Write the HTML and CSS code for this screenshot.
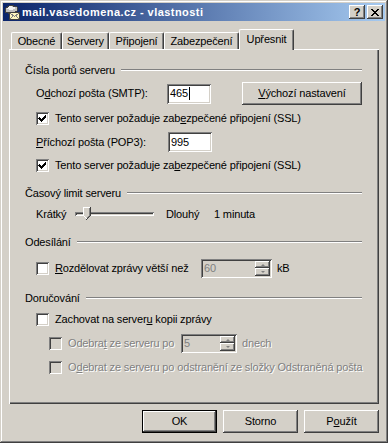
FILE: index.html
```html
<!DOCTYPE html>
<html lang="cs">
<head>
<meta charset="UTF-8">
<title>mail.vasedomena.cz - vlastnosti</title>
<link rel="stylesheet" href="styles.css">
</head>
<body>
<div class="window">
  <div class="titlebar">
    <svg class="app-icon" width="16" height="16" viewBox="0 0 16 16" shape-rendering="crispEdges">
      <polygon points="1,5 6,1 13,3 13,7 8,10 1,8" fill="#c0c0c0" stroke="#404040" stroke-width="1"/>
      <polygon points="2,5 6,2 12,4 8,6" fill="#f0f0f0"/>
      <rect x="5.5" y="8.5" width="10" height="7" fill="#fff8c0" stroke="#404040"/>
      <polyline points="6,9 10.5,12.5 15,9" fill="none" stroke="#808080"/>
      <line x1="6" y1="15" x2="9" y2="12" stroke="#808080"/>
      <line x1="15" y1="15" x2="12" y2="12" stroke="#808080"/>
    </svg>
    <span class="title">mail.vasedomena.cz - vlastnosti</span>
    <div class="caption-buttons">
      <span class="cap-btn">?</span>
      <span class="cap-btn">
        <svg width="8" height="7" viewBox="0 0 8 7" shape-rendering="crispEdges">
          <path d="M0 0h2v1h1v1h2v-1h1v-1h2v1h-1v1h-1v1h-1v1h1v1h1v1h1v1h-2v-1h-1v-1h-2v1h-1v1h-2v-1h1v-1h1v-1h1v-1h-1v-1h-1v-1h-1z" fill="#000"/>
        </svg>
      </span>
    </div>
  </div>

  <div class="client">
    <div class="tabs">
      <span class="tab tab-general">Obecné</span>
      <span class="tab tab-servers">Servery</span>
      <span class="tab tab-connect">Připojení</span>
      <span class="tab tab-security">Zabezpečení</span>
      <span class="tab tab-advanced active">Upřesnit</span>
    </div>

    <div class="panel">
      <div class="group-head first"><span>Čísla portů serveru</span><i class="etch"></i></div>

      <div class="row row-smtp">
        <span class="port-label">O<u>d</u>chozí pošta (SMTP):</span>
        <span class="field port">465<span class="caret"></span></span>
        <span class="btn btn-defaults"><u>V</u>ýchozí nastavení</span>
      </div>

      <div class="row check-row row-ssl1">
        <span class="check"><svg width="13" height="13" viewBox="0 0 13 13" shape-rendering="crispEdges" fill="#000"><path d="M3 5h1v1h1v1h1v-1h1v-1h1v-1h1v-1h1v3h-1v1h-1v1h-1v1h-1v1h-1v-1h-1v-1h-1v-1h-1z"/></svg></span>
        <span>Tento server požaduje zab<u>e</u>zpečené připojení (SSL)</span>
      </div>

      <div class="row row-pop">
        <span class="port-label"><u>P</u>říchozí pošta (POP3):</span>
        <span class="field port">995</span>
      </div>

      <div class="row check-row row-ssl2">
        <span class="check"><svg width="13" height="13" viewBox="0 0 13 13" shape-rendering="crispEdges" fill="#000"><path d="M3 5h1v1h1v1h1v-1h1v-1h1v-1h1v-1h1v3h-1v1h-1v1h-1v1h-1v1h-1v-1h-1v-1h-1v-1h-1z"/></svg></span>
        <span>Tento server požaduje za<u>b</u>ezpečené připojení (SSL)</span>
      </div>

      <div class="group-head group-timeout"><span>Časový limit serveru</span><i class="etch"></i></div>

      <div class="row row-slider">
        <span class="slider-min">Krátký</span>
        <span class="slider">
          <i class="track"></i>
          <svg class="thumb" width="8" height="13" viewBox="0 0 8 13" shape-rendering="crispEdges">
            <path d="M0 0h8v9l-4 4l-4-4z" fill="#d4d0c8"/>
            <path d="M0 0h7v1h-6v8h1v1h1v1h1v1h-1v-1h-1v-1h-1v-1h-1z" fill="#fff"/>
            <path d="M7 0h1v9h-1v1h-1v1h-1v1h-1v1h-1v-1h1v-1h1v-1h1v-1h1z" fill="#404040"/>
            <path d="M6 1h1v8h-1v1h-1v1h-1v-1h1v-1h1z" fill="#808080"/>
          </svg>
        </span>
        <span class="slider-max">Dlouhý</span>
        <span>1 minuta</span>
      </div>

      <div class="group-head group-send"><span>Odesílání</span><i class="etch"></i></div>

      <div class="row check-row row-split">
        <span class="check"></span>
        <span class="split-label"><u>R</u>ozdělovat zprávy větší než</span>
        <span class="field spin spin-size">
          <span class="spin-value">60</span>
          <span class="spin-btns"><i class="spin-up"></i><i class="spin-down"></i></span>
        </span>
        <span class="unit">kB</span>
      </div>

      <div class="group-head group-deliver"><span>Doručování</span><i class="etch"></i></div>

      <div class="row check-row row-keep">
        <span class="check"></span>
        <span>Zachovat na server<u>u</u> kopii zprávy</span>
      </div>

      <div class="row check-row sub disabled row-days">
        <span class="check"></span>
        <span class="days-label">Odebra<u>t</u> ze serveru po</span>
        <span class="field spin spin-days">
          <span class="spin-value">5</span>
          <span class="spin-btns"><i class="spin-up"></i><i class="spin-down"></i></span>
        </span>
        <span class="unit">dnech</span>
      </div>

      <div class="row check-row sub disabled row-deleted">
        <span class="check"></span>
        <span>O<u>d</u>ebrat ze serveru po odstranění ze složky Odstraněná pošta</span>
      </div>
    </div>

    <div class="buttons">
      <span class="btn dlg-btn default">OK</span>
      <span class="btn dlg-btn">Storno</span>
      <span class="btn dlg-btn">P<u>o</u>užít</span>
    </div>
  </div>
</div>
</body>
</html>
```

FILE: styles.css
```css
* {
  margin: 0;
  padding: 0;
  box-sizing: border-box;
}
body {
  background-color: #d4d0c8;
  font-family: "Liberation Sans", Arial, sans-serif;
  font-size: 11px;
  line-height: 13px;
  letter-spacing: -0.15px;
  white-space: nowrap;
  color: #000;
}
u {
  text-decoration: underline;
  text-underline-offset: 1px;
}

/* window frame */
.window {
  width: 388px;
  height: 443px;
  padding: 3px;
  background-color: #d4d0c8;
  box-shadow: inset -1px -1px #404040, inset 1px 1px #d4d0c8,
              inset -2px -2px #808080, inset 2px 2px #fff;
}
.titlebar {
  height: 18px;
  display: flex;
  align-items: center;
  padding: 0 2px 0 1px;
  background: linear-gradient(to right, #0a246a, #a6caf0);
}
.app-icon {
  display: block;
  flex: none;
}
.title {
  margin-left: 2px;
  color: #fff;
  font-weight: bold;
  font-size: 11px;
  letter-spacing: 0.45px;
}
.caption-buttons {
  margin-left: auto;
  display: flex;
  gap: 2px;
}
.cap-btn {
  width: 16px;
  height: 14px;
  display: flex;
  align-items: center;
  justify-content: center;
  background-color: #d4d0c8;
  font-weight: bold;
  font-size: 11px;
  box-shadow: inset -1px -1px #404040, inset 1px 1px #fff,
              inset -2px -2px #808080;
}
.cap-btn svg {
  display: block;
}

/* tabs */
.client {
  padding: 8px 6px 0 6px;
}
.tabs {
  position: relative;
  z-index: 1;
  display: flex;
  align-items: flex-end;
  height: 21px;
  padding-left: 2px;
  margin-bottom: -1px;
}
.tab {
  height: 17px;
  margin-bottom: 1px;
  display: flex;
  justify-content: center;
  padding-top: 2px;
  background-color: #d4d0c8;
  border-left: 1px solid #fff;
  border-top: 1px solid #fff;
  border-right: 1px solid #404040;
  border-top-left-radius: 2px;
  border-top-right-radius: 2px;
  box-shadow: inset -1px 0 #808080;
}
.tab-general { width: 51px; }
.tab-servers { width: 47px; }
.tab-connect { width: 55px; }
.tab-security { width: 75px; }
.tab-advanced { width: 55px; }
.tab.active {
  height: 21px;
  margin-bottom: 0;
  padding-top: 3px;
}

/* page */
.panel {
  height: 355px;
  padding: 14px 17px 0 16px;
  box-shadow: inset 1px 1px #fff, inset -1px -1px #404040,
              inset -2px -2px #808080;
}
.group-head {
  display: flex;
  align-items: center;
  height: 14px;
}
.etch {
  flex: 1;
  height: 2px;
  margin-left: 6px;
  border-top: 1px solid #808080;
  border-bottom: 1px solid #fff;
}
.group-timeout { margin-top: 14px; }
.group-send { margin-top: 11px; }
.group-deliver { margin-top: 13px; }

.row {
  display: flex;
  align-items: center;
  padding-left: 11px;
}
.row.sub {
  padding-left: 24px;
}
.check-row {
  height: 14px;
}
.row-smtp { height: 23px; margin-top: 5px; }
.row-ssl1 { margin-top: 6px; }
.row-pop { height: 20px; margin-top: 7px; }
.row-ssl2 { margin-top: 6px; }
.row-slider { height: 20px; margin-top: 4px; }
.row-split { height: 20px; margin-top: 9px; }
.row-keep { margin-top: 7px; }
.row-days { height: 20px; margin-top: 7px; }
.row-deleted { margin-top: 7px; }

.port-label {
  width: 132px;
}
.field {
  height: 20px;
  display: flex;
  align-items: center;
  padding-left: 3px;
  background-color: #fff;
  box-shadow: inset 1px 1px #808080, inset -1px -1px #fff,
              inset 2px 2px #404040, inset -2px -2px #d4d0c8;
}
.port {
  width: 44px;
}
.caret {
  display: inline-block;
  width: 1px;
  height: 13px;
  margin-left: 1px;
  background-color: #000;
}
.btn {
  display: flex;
  align-items: center;
  justify-content: center;
  height: 23px;
  background-color: #d4d0c8;
  box-shadow: inset -1px -1px #404040, inset 1px 1px #fff,
              inset -2px -2px #808080;
}
.btn-defaults {
  width: 121px;
  margin-left: 31px;
}

.check {
  width: 13px;
  height: 13px;
  flex: none;
  margin-right: 6px;
  background-color: #fff;
  box-shadow: inset 1px 1px #808080, inset -1px -1px #fff,
              inset 2px 2px #404040, inset -2px -2px #d4d0c8;
}
.check svg {
  display: block;
}
.disabled {
  color: #808080;
  text-shadow: 1px 1px 0 #fff;
}
.disabled .check {
  background-color: #d4d0c8;
}

/* slider */
.slider-min {
  width: 39px;
}
.slider {
  position: relative;
  width: 79px;
  height: 4px;
  box-shadow: inset 1px 1px #808080, inset -1px -1px #fff,
              inset 2px 2px #404040, inset -2px -2px #d4d0c8;
}
.track {
  display: block;
}
.thumb {
  position: absolute;
  left: 8px;
  top: -5px;
  display: block;
}
.slider-max {
  width: 48px;
  margin-left: 12px;
}

/* spinners */
.split-label {
  width: 146px;
}
.days-label {
  width: 113px;
}
.spin {
  justify-content: space-between;
  padding-right: 2px;
  background-color: #d4d0c8;
  height: 19px;
}
.spin-size { width: 71px; }
.spin-days { width: 56px; }
.spin-value {
  color: #808080;
  text-shadow: none;
}
.spin-btns {
  display: flex;
  flex-direction: column;
  width: 15px;
  height: 15px;
}
.spin-btns i {
  flex: 1;
  position: relative;
  background-color: #d4d0c8;
  box-shadow: inset -1px -1px #404040, inset 1px 1px #fff,
              inset -2px -2px #808080;
}
.spin-btns i::after {
  content: "";
  position: absolute;
  left: 6px;
  top: 3px;
  border-left: 2px solid transparent;
  border-right: 2px solid transparent;
}
.spin-up::after {
  border-bottom: 2px solid #808080;
}
.spin-down::after {
  border-top: 2px solid #808080;
}
.unit {
  margin-left: 5px;
}

/* dialog buttons */
.buttons {
  display: flex;
  justify-content: flex-end;
  gap: 6px;
  margin-top: 6px;
}
.dlg-btn {
  width: 75px;
}
.dlg-btn.default {
  border: 1px solid #000;
}
```
